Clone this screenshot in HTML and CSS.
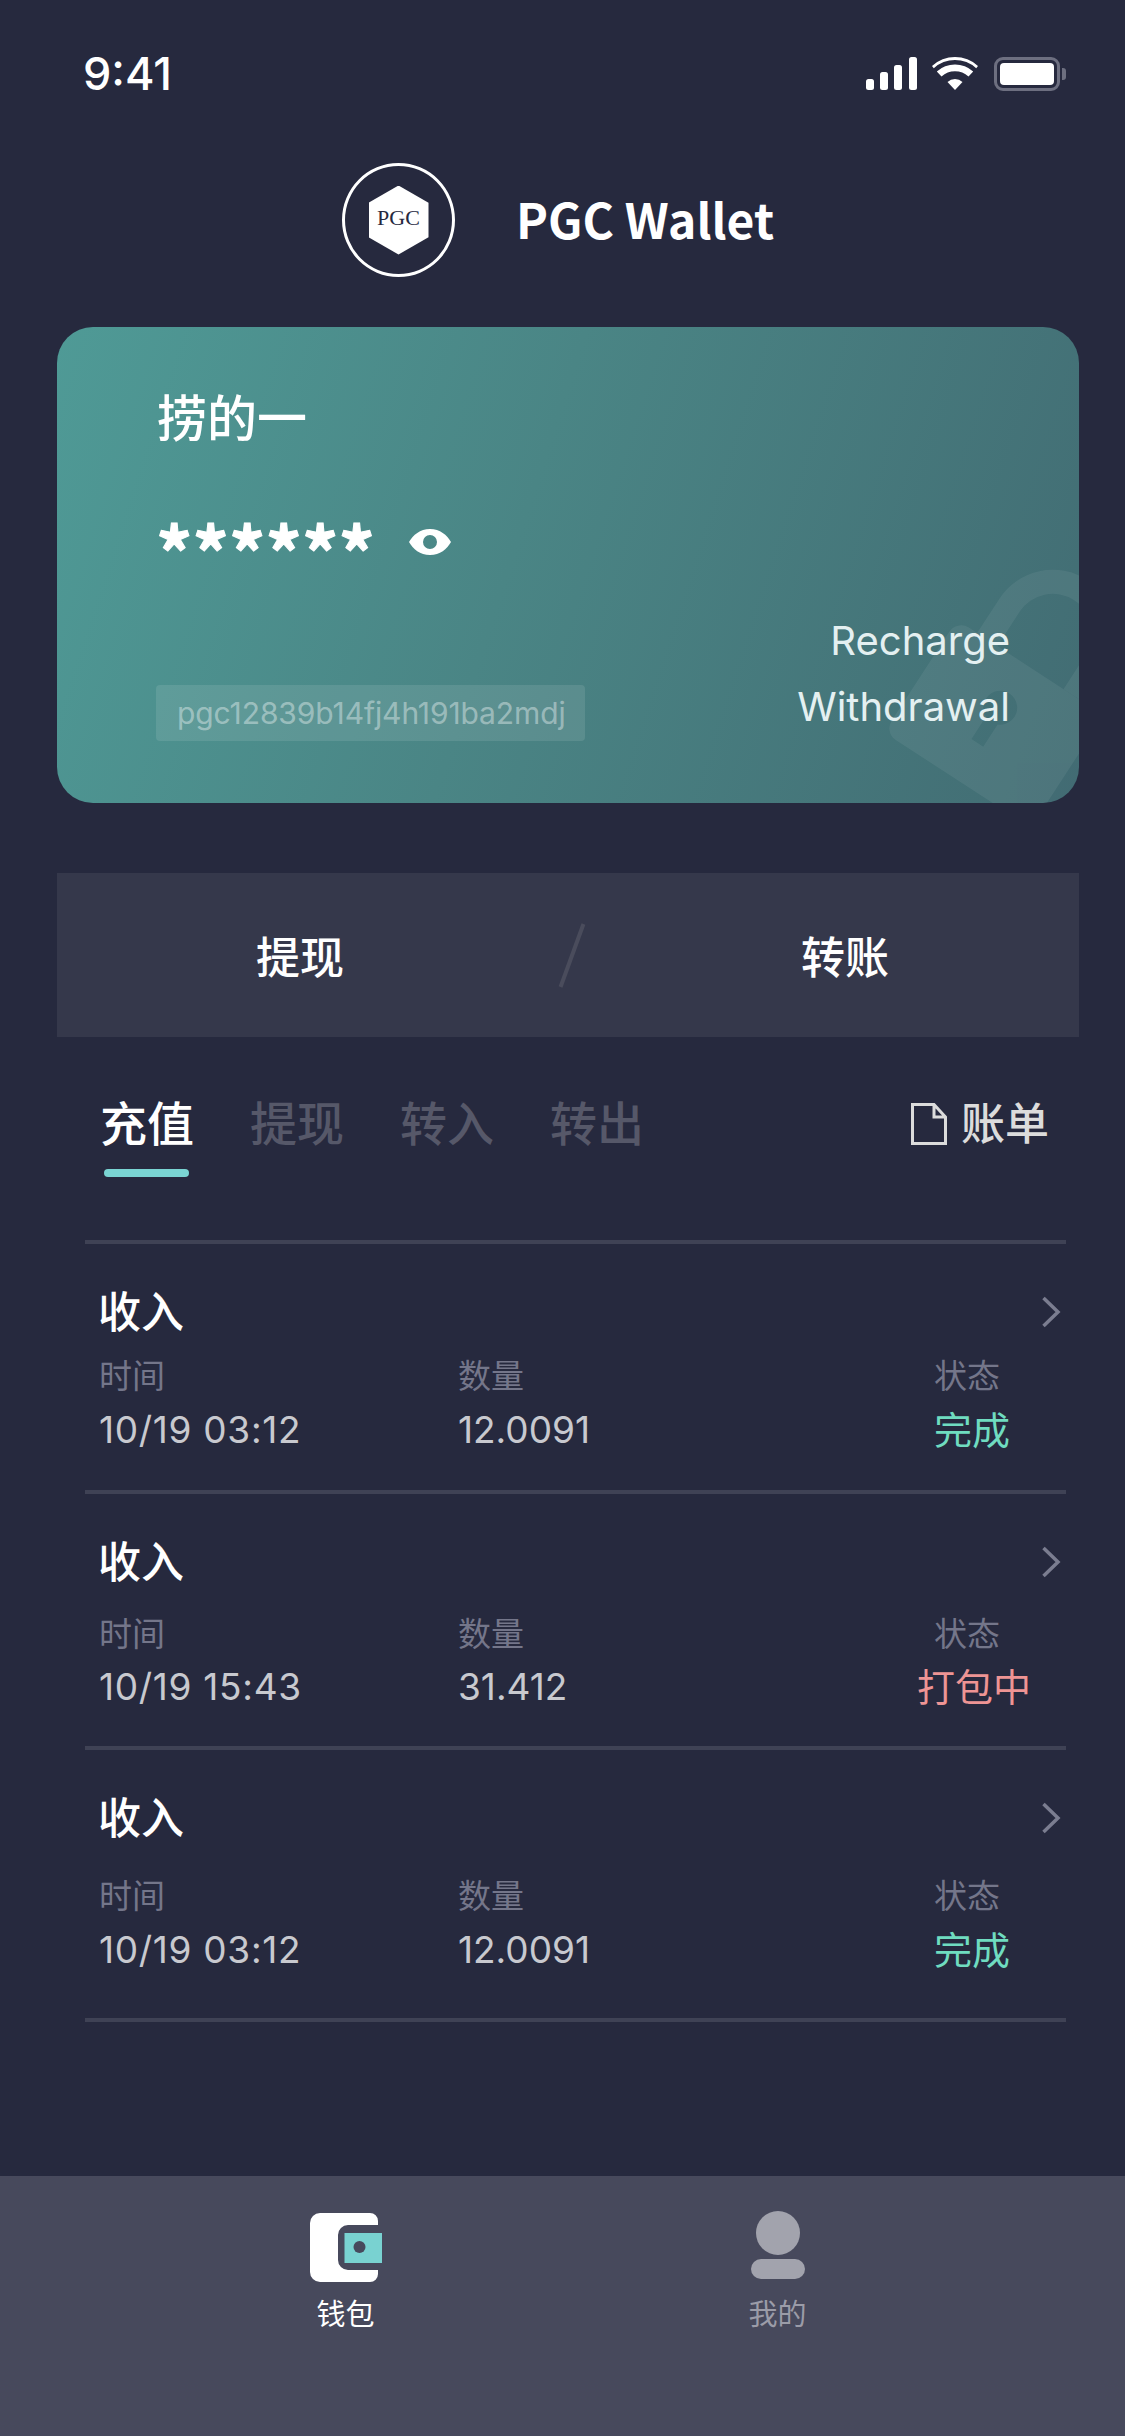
FILE: index.html
```html
<!DOCTYPE html>
<html lang="zh-CN">

<head>
	<meta charset="UTF-8">
	<meta name="viewport" content="width=device-width, initial-scale=1.0">
	<title>PGC Wallet</title>
	<link rel="stylesheet" href="styles.css">
</head>

<body>
	<div class="status-bar">
		<span class="status-time">9:41</span>
		<div class="status-icons">
			<svg class="icon-signal" viewBox="0 0 51 33" width="51" height="33">
				<rect x="0" y="22" width="8" height="11" rx="2.5" />
				<rect x="14" y="15" width="8" height="18" rx="2.5" />
				<rect x="28" y="8" width="8" height="25" rx="2.5" />
				<rect x="43" y="0" width="8" height="33" rx="2.5" />
			</svg>
			<svg class="icon-wifi" viewBox="0 0 46 33" width="46" height="33">
				<path d="M23 33 L15.5 25 A11 11 0 0 1 30.5 25 Z" />
				<path d="M9.5 19.500 L4.800 14.500 A27 27 0 0 1 41.200 14.500 L36.500 19.500 A20 20 0 0 0 9.500 19.500 Z" />
				<path d="M1.800 11.300 L0 9 A34 34 0 0 1 46 9 L44.200 11.300 A31 31 0 0 0 1.800 11.300 Z" />
			</svg>
			<div class="battery">
				<div class="battery-level"></div>
			</div>
		</div>
	</div>

	<header class="brand">
		<div class="brand-logo">
			<div class="brand-hex">PGC</div>
		</div>
		<h1 class="brand-name">PGC Wallet</h1>
	</header>

	<section class="card">
		<svg class="card-lock" viewBox="0 0 1022 476" width="1022" height="476">
			<g transform="translate(900 293) rotate(33)" fill="#fff">
				<path d="M14 0 H161 A14 14 0 0 1 175 14 V120 A14 14 0 0 1 161 134 H14 A14 14 0 0 1 0 120 V14 A14 14 0 0 1 14 0 Z M77 65.500 A17 17 0 1 1 91 65.500 V92 H77 Z" fill-rule="evenodd" />
				<path d="M24 0 V-41 A63.500 63.500 0 0 1 151 -41 V0 H127 V-41 A39.500 39.500 0 0 0 48 -41 V0 Z" />
			</g>
		</svg>
		<div class="card-name">捞的一</div>
		<div class="card-balance">
			<span class="card-stars">******</span>
			<svg class="icon-eye" viewBox="0 0 42 26" width="42" height="26">
				<path d="M21 0 C31 0 38 6 42 13 C38 20 31 26 21 26 C11 26 4 20 0 13 C4 6 11 0 21 0 Z M21 6 A7 7 0 1 0 21 20 A7 7 0 1 0 21 6 Z" fill="#fff" fill-rule="evenodd" />
			</svg>
		</div>
		<div class="card-bottom">
			<div class="card-address">pgc12839b14fj4h191ba2mdj</div>
			<div class="card-links">
				<span>Recharge</span>
				<span>Withdrawal</span>
			</div>
		</div>
	</section>

	<section class="actions">
		<div class="action">提现</div>
		<div class="action-slash"></div>
		<div class="action">转账</div>
	</section>

	<nav class="tabs">
		<div class="tab active">充值</div>
		<div class="tab">提现</div>
		<div class="tab">转入</div>
		<div class="tab">转出</div>
		<div class="bill">
			<svg viewBox="0 0 36 42" width="36" height="42">
				<path d="M1.500 1.500 H23 L34.500 14 V40.500 H1.500 Z M23 1.500 V14 H34.500" fill="none" stroke="#dcdcdc" stroke-width="3" />
			</svg>
			<span>账单</span>
		</div>
	</nav>

	<div class="list">
		<div class="row">
			<div class="row-head">
				<span class="row-title">收入</span>
				<svg class="chevron" viewBox="0 0 20 32" width="20" height="32">
					<path d="M2.500 2 L17 16 L2.500 30" fill="none" stroke="#7b7d90" stroke-width="3.500" />
				</svg>
			</div>
			<div class="row-meta">
				<div class="col-time"><div class="label">时间</div><div class="value">10/19 03:12</div></div>
				<div class="col-num"><div class="label">数量</div><div class="value">12.0091</div></div>
				<div class="col-state"><div class="label">状态</div><div class="value done">完成</div></div>
			</div>
		</div>
		<div class="row">
			<div class="row-head">
				<span class="row-title">收入</span>
				<svg class="chevron" viewBox="0 0 20 32" width="20" height="32">
					<path d="M2.500 2 L17 16 L2.500 30" fill="none" stroke="#7b7d90" stroke-width="3.500" />
				</svg>
			</div>
			<div class="row-meta">
				<div class="col-time"><div class="label">时间</div><div class="value">10/19 15:43</div></div>
				<div class="col-num"><div class="label">数量</div><div class="value">31.412</div></div>
				<div class="col-state"><div class="label">状态</div><div class="value packing">打包中</div></div>
			</div>
		</div>
		<div class="row">
			<div class="row-head">
				<span class="row-title">收入</span>
				<svg class="chevron" viewBox="0 0 20 32" width="20" height="32">
					<path d="M2.500 2 L17 16 L2.500 30" fill="none" stroke="#7b7d90" stroke-width="3.500" />
				</svg>
			</div>
			<div class="row-meta">
				<div class="col-time"><div class="label">时间</div><div class="value">10/19 03:12</div></div>
				<div class="col-num"><div class="label">数量</div><div class="value">12.0091</div></div>
				<div class="col-state"><div class="label">状态</div><div class="value done">完成</div></div>
			</div>
		</div>
	</div>

	<footer class="tabbar">
		<div class="tabbar-item current">
			<svg viewBox="0 0 72 69" width="72" height="69">
				<path d="M10 0 H60 A8 8 0 0 1 68 8 V12 H38 A10 10 0 0 0 28 22 V47 A10 10 0 0 0 38 57 H68 V61 A8 8 0 0 1 60 69 H10 A10 10 0 0 1 0 59 V10 A10 10 0 0 1 10 0 Z" fill="#fff" />
				<rect x="34.500" y="20" width="37.500" height="30" fill="#79d2d1" />
				<ellipse cx="49.500" cy="34" rx="6" ry="6" fill="#47495c" />
			</svg>
			<span>钱包</span>
		</div>
		<div class="tabbar-item">
			<svg viewBox="0 0 54 69" width="54" height="69">
				<circle cx="27" cy="22" r="22" fill="#a2a3ad" />
				<rect x="0" y="48" width="54" height="20" rx="10" fill="#a2a3ad" />
			</svg>
			<span>我的</span>
		</div>
	</footer>
</body>

</html>
```

FILE: styles.css
```css
*,
*::before,
*::after {
	box-sizing: border-box
}

html,
body {
	margin: 0;
	padding: 0;
}

body {
	width: 1125px;
	height: 2436px;
	display: flex;
	flex-direction: column;
	overflow: hidden;
	background-color: #26293e;
	color: #ffffff;
	font-family: "Inter", "Noto Sans CJK SC", sans-serif;
}

/* status bar */
.status-bar {
	height: 146px;
	flex: none;
	padding: 57px 65px 0 83px;
	display: flex;
	justify-content: space-between;
	align-items: flex-start;
}

.status-time {
	font-size: 45px;
	line-height: 33px;
	font-weight: 500;
}

.status-icons {
	display: flex;
	align-items: flex-start;
	gap: 15px;
}

.status-icons svg {
	fill: #ffffff;
	display: block;
}

.battery {
	position: relative;
	width: 66px;
	height: 34px;
	margin-left: 1px;
	border: 3px solid #6d6f80;
	border-radius: 9px;
	padding: 3px;
}

.battery::after {
	content: "";
	position: absolute;
	right: -9px;
	top: 8px;
	width: 4px;
	height: 12px;
	background-color: #6d6f80;
	border-radius: 0 3px 3px 0;
}

.battery-level {
	width: 100%;
	height: 100%;
	background-color: #ffffff;
	border-radius: 4px;
}

/* logo + title */
.brand {
	flex: none;
	height: 181px;
	padding: 17px 0 0 342px;
	display: flex;
	align-items: flex-start;
}

.brand-logo {
	width: 113px;
	height: 114px;
	border: 3px solid #ffffff;
	border-radius: 50%;
	display: flex;
	align-items: center;
	justify-content: center;
}

.brand-hex {
	width: 60px;
	height: 69px;
	background-color: #ffffff;
	clip-path: polygon(50% 0, 100% 25%, 100% 75%, 50% 100%, 0 75%, 0 25%);
	color: #26293e;
	font-family: "Liberation Serif", serif;
	font-size: 22px;
	line-height: 64px;
	text-align: center;
}

.brand-name {
	margin: 23px 0 0 61px;
	font-family: "Noto Sans CJK SC", sans-serif;
	font-size: 48px;
	line-height: 64px;
	font-weight: 700;
}

/* balance card */
.card {
	position: relative;
	flex: none;
	width: 1022px;
	height: 476px;
	margin-left: 57px;
	border-radius: 36px;
	overflow: hidden;
	padding: 60px 69px 0 100px;
	background: linear-gradient(108deg, #4f9a96 0%, #4a8585 45%, #426c73 100%);
}

.card-lock {
	position: absolute;
	left: 0;
	top: 0;
	opacity: 0.06;
}

.card-name {
	position: relative;
	font-size: 50px;
	line-height: 64px;
	font-weight: 500;
}

.card-balance {
	position: relative;
	margin-top: 61px;
	height: 60px;
	display: flex;
	align-items: center;
	gap: 37px;
}

.card-stars {
	font-family: "Noto Sans CJK SC", sans-serif;
	font-size: 72px;
	line-height: 60px;
	font-weight: 700;
	-webkit-text-stroke: 1px #ffffff;
	width: 216px;
	margin-left: -1px;
	padding-top: 16px;
}

.card-bottom {
	position: relative;
	margin-top: 36px;
	display: flex;
	justify-content: space-between;
	align-items: flex-end;
}

.card-address {
	margin: 0 0 -1px -1px;
	width: 429px;
	height: 56px;
	padding-left: 21px;
	background-color: rgba(255, 255, 255, 0.1);
	border-radius: 4px;
	color: rgba(255, 255, 255, 0.4);
	font-size: 30px;
	letter-spacing: -0.1px;
	line-height: 56px;
	white-space: nowrap;
}

.card-links {
	display: flex;
	flex-direction: column;
	align-items: flex-end;
	color: #e4f0f1;
	font-size: 40px;
	line-height: 66px;
}

/* withdraw / transfer band */
.actions {
	flex: none;
	width: 1022px;
	height: 164px;
	margin: 70px 0 0 57px;
	background-color: #35384b;
	display: grid;
	grid-template-columns: 486px 58px 1fr;
	align-items: center;
	justify-items: center;
	font-size: 44px;
	font-weight: 500;
}

.action:last-child {
	padding-left: 10px;
}

.action-slash {
	width: 4px;
	height: 67px;
	background-color: #4a4c5c;
	transform: rotate(20deg);
}

/* record tabs */
.tabs {
	flex: none;
	height: 203px;
	padding: 55px 76px 0 100px;
	display: flex;
	align-items: flex-start;
	gap: 56px;
	font-size: 47px;
	line-height: 64px;
	color: #565869;
	font-weight: 500;
}

.tab {
	position: relative;
}

.tab.active {
	color: #ffffff;
}

.tab.active::after {
	content: "";
	position: absolute;
	left: 4px;
	right: 5px;
	top: 77px;
	height: 8px;
	background-color: #7ad4d3;
	border-radius: 4px;
}

.bill {
	margin-left: auto;
	display: flex;
	align-items: center;
	gap: 14px;
	color: #dcdcdc;
	font-size: 44px;
	font-weight: 500;
}

.bill svg {
	display: block;
}

/* records */
.list {
	flex: none;
	width: 981px;
	margin-left: 85px;
	border-top: 4px solid #3f4255;
}

.row {
	padding: 0 14px;
	border-bottom: 4px solid #3f4255;
}

.row-head {
	height: 60px;
	margin-top: 38px;
	display: flex;
	justify-content: space-between;
	align-items: center;
	margin-left: -1px;
	margin-right: -9px;
}

.row-title {
	font-size: 43px;
	line-height: 60px;
	font-weight: 500;
}

.chevron {
	display: block;
}

.row-meta {
	display: grid;
	grid-template-columns: 359px 459px 112px;
	margin-top: 10px;
	padding-bottom: 36px;
}

.row:nth-child(2) .row-meta {
	margin-top: 18px;
	padding-bottom: 35px;
}

.row:nth-child(2) .value {
	margin-top: 5px;
}

.row:nth-child(3) .row-meta {
	margin-top: 24px;
	padding-bottom: 44px;
}

.label {
	font-size: 33px;
	line-height: 48px;
	color: #74768a;
}

.value {
	margin-top: 6px;
	font-size: 37px;
	line-height: 48px;
	color: #c8c9cf;
	white-space: nowrap;
}

.col-time .value {
	letter-spacing: 0.7px;
}

.col-state {
	text-align: center;
}

.col-state .label {
	padding-right: 12px;
}

.col-state .value {
	font-size: 38px;
	margin-right: 2px;
}

.value.done {
	color: #6fdcc0;
}

.value.packing {
	color: #ee9494;
}

/* bottom tabs */
.tabbar {
	margin-top: auto;
	flex: none;
	height: 260px;
	background-color: #47495c;
	display: grid;
	grid-template-columns: 432px 432px;
	justify-content: center;
	padding: 35px 2px 0 0;
	font-size: 29px;
	color: #9b9ca8;
}

.tabbar-item {
	display: flex;
	flex-direction: column;
	align-items: center;
	gap: 11px;
}

.tabbar-item svg {
	display: block;
}

.tabbar-item.current svg {
	margin: 2px 0 -2px;
}

.tabbar-item.current {
	color: #ffffff;
}
```
